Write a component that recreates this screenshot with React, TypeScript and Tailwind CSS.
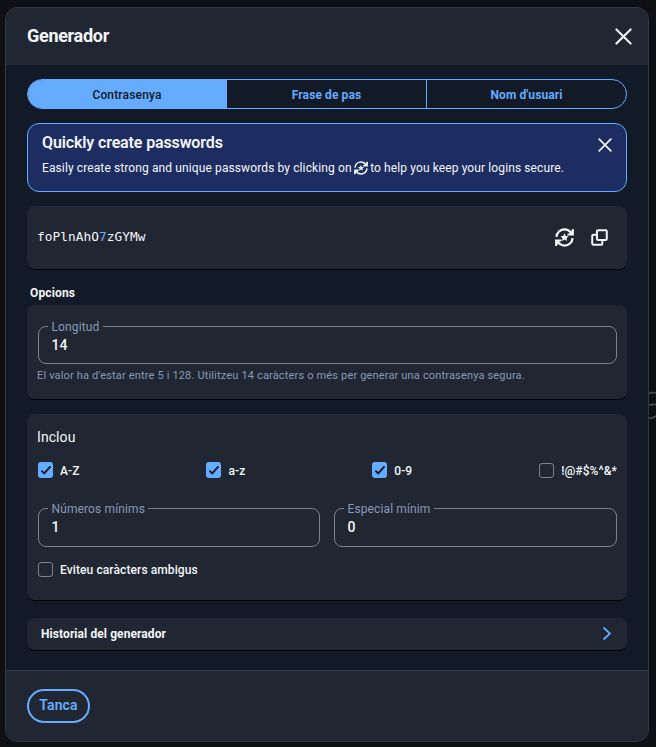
import React from "react";

function CloseIcon({ className }: { className: string }) {
  return (
    <svg viewBox="0 0 18 18" fill="none" stroke="#f3f6f9" strokeLinecap="round" className={className}>
      <path d="M1.5 1.5 16.5 16.5M16.5 1.5 1.5 16.5" strokeWidth="2.2" />
    </svg>
  );
}

function GenerateIcon({ className }: { className: string }) {
  return (
    <svg viewBox="0 0 20 20" fill="none" stroke="#f3f6f9" strokeWidth="2.3" className={className}>
      <path d="M1.5 9.4C1.8 4.8 5.6 1.5 10 1.5c2.9 0 5.4 1.5 7.2 4.1" />
      <path d="M18.5 10.6c-.3 4.6-4.1 7.9-8.5 7.9-2.9 0-5.4-1.5-7.2-4.1" />
      <path d="M19.9 1v6.9h-6.8v-1.7l3-.9 2-4.3z" fill="#f3f6f9" stroke="none" />
      <path d="M.1 19v-6.9h6.8v1.7l-3 .9-2 4.3z" fill="#f3f6f9" stroke="none" />
      <path
        d="m10 5.6 1.3 2.8 3 .3-2.2 2 .6 3-2.7-1.5-2.7 1.5.6-3-2.2-2 3-.3z"
        fill="#f3f6f9"
        stroke="none"
      />
    </svg>
  );
}

function CopyIcon({ className }: { className: string }) {
  return (
    <svg viewBox="0 0 18 18" fill="none" stroke="#f3f6f9" strokeWidth="2.1" strokeLinejoin="round" className={className}>
      <rect x="6.3" y="1.3" width="10.4" height="10.4" rx="1.2" />
      <path d="M6 6H2.7c-.7 0-1.4.5-1.4 1.2v8.1c0 .7.7 1.4 1.4 1.4h8.1c.7 0 1.2-.7 1.2-1.4V12" />
    </svg>
  );
}

function Card({ className, children }: { className: string; children: React.ReactNode }) {
  return <section className={`rounded-lg border-b border-black bg-[#212732] ${className}`}>{children}</section>;
}

function Field({ label, value, className }: { label: string; value: string; className: string }) {
  return (
    <fieldset className={`min-w-0 rounded-lg border border-[#79808e] ${className}`}>
      <legend className="ml-[9px] h-4 pr-[3.5px] pl-[3.5px] text-xs leading-[18px] tracking-[0.12px] text-[#8898b5]">{label}</legend>
      <div className="px-[12.5px] pt-px text-sm leading-5 font-medium text-[#f3f6f9]">{value}</div>
    </fieldset>
  );
}

function Check({ label, checked = false }: { label: string; checked?: boolean }) {
  return (
    <label className="flex h-4 items-center gap-[7px] text-xs font-medium text-[#f3f6f9]">
      {checked ? (
        <span className="flex h-4 w-[15px] items-center justify-center rounded-[3px] bg-[#65abff]">
          <svg viewBox="0 0 12 12" className="size-3" fill="none" stroke="#121a27" strokeWidth="1.9" strokeLinecap="round">
            <path d="M2 7.2 4.3 9.3 10 2.9" />
          </svg>
        </span>
      ) : (
        <span className="h-[15px] w-[15px] rounded-[3px] border border-[#79808e]" />
      )}
      <span className="pt-px tracking-[0.1px]">{label}</span>
    </label>
  );
}

export default function App() {
  return (
    <div className="relative h-[747px] w-[656px] overflow-hidden bg-[#0f1013] pt-[7px] pl-[5px] font-['Roboto',sans-serif]">
      <svg className="absolute top-[388px] left-[648px] h-8 w-2" fill="none" stroke="#4b4b4d" strokeWidth="1.6">
        <path d="M0 5.5Q4 4 8 5M0 17.5Q4 16 8 16.5M0 30Q4 31 8 28" />
      </svg>
      <main className="relative flex h-[735px] w-[644px] flex-col overflow-hidden rounded-xl border border-[#303946] bg-[#121a27]">
        <header className="flex h-[57px] shrink-0 items-center justify-between bg-[#212732] pr-4 pl-[21px]">
          <h1 className="-mt-0.5 text-[18px] font-bold tracking-[-0.3px] text-[#f3f6f9]">Generador</h1>
          <CloseIcon className="size-[17px]" />
        </header>

        <div className="flex flex-1 flex-col px-[21px] pt-3.5">
          <nav className="flex h-[30px] shrink-0 overflow-hidden rounded-full border border-[#65abff] text-xs font-bold text-[#65abff]">
            <div className="flex w-[199px] items-center justify-center bg-[#65abff] pt-px pr-px font-medium tracking-[0.17px] text-[#121a27]">
              Contrasenya
            </div>
            <div className="flex w-[200px] items-center justify-center border-r border-[#65abff] pt-px tracking-[0.1px]">
              Frase de pas
            </div>
            <div className="flex flex-1 items-center justify-center pt-px tracking-[0.1px]">Nom d'usuari</div>
          </nav>

          <section className="mt-3.5 flex h-[69px] shrink-0 justify-between rounded-xl border border-[#65abff] bg-[#1d2d61] pr-3.5 pl-3.5 text-[#f3f6f9]">
            <div className="pt-[9px]">
              <h2 className="text-base leading-5 font-semibold tracking-[-0.13px]">Quickly create passwords</h2>
              <p className="mt-[7px] flex items-center text-xs leading-4 tracking-[0.11px]">
                <span>Easily create strong and unique passwords by clicking on</span>
                <GenerateIcon className="mr-[2.5px] ml-[2px] size-[14px]" />
                <span>to help you keep your logins secure.</span>
              </p>
            </div>
            <CloseIcon className="mt-3.5 size-[14px]" />
          </section>

          <Card className="mt-3.5 flex h-16 shrink-0 items-center justify-between pr-[19px] pl-2.5">
            <code className="-mt-0.5 font-['DejaVu_Sans_Mono',monospace] text-[12.8px] tracking-[0.04px] text-[#f3f6f9]">
              foPlnAhO<span className="text-[#65abff]">7</span>zGYMw
            </code>
            <div className="flex items-center gap-[17px]">
              <GenerateIcon className="size-[19px]" />
              <CopyIcon className="size-[17px]" />
            </div>
          </Card>

          <h2 className="mt-[15px] pl-[3px] text-xs leading-4 font-bold tracking-[0.14px] text-[#f3f6f9]">Opcions</h2>

          <Card className="mt-1 h-[95px] shrink-0 pt-[13px] pr-[10px] pl-[11px]">
            <Field label="Longitud" value="14" className="h-[46px]" />
            <p className="mt-1 -ml-px text-[11px] leading-4 tracking-[0.165px] whitespace-nowrap text-[#8898b5]">
              El valor ha d'estar entre 5 i 128. Utilitzeu 14 caràcters o més per generar una contrasenya segura.
            </p>
          </Card>

          <Card className="mt-3.5 h-[187px] shrink-0 pt-[13px] pr-[10px] pl-[11px]">
            <h3 className="-ml-px text-sm leading-5 tracking-[0.08px] text-[#f3f6f9]">Inclou</h3>
            <div className="mt-[15px] flex justify-between">
              <Check label="A-Z" checked />
              <Check label="a-z" checked />
              <Check label="0-9" checked />
              <Check label="!@#$%^&*" />
            </div>
            <div className="mt-[22px] flex gap-3.5">
              <Field label="Números mínims" value="1" className="h-[47px] w-[282px]" />
              <Field label="Especial mínim" value="0" className="h-[47px] flex-1" />
            </div>
            <div className="mt-3.5">
              <Check label="Eviteu caràcters ambigus" />
            </div>
          </Card>

          <Card className="mt-[17px] flex h-[33px] shrink-0 items-center justify-between pr-4 pl-3.5">
            <h3 className="text-xs font-bold tracking-[0.08px] text-[#f3f6f9]">Historial del generador</h3>
            <svg viewBox="0 0 8 13" className="-mt-px h-[13px] w-2" fill="none" stroke="#65abff" strokeWidth="1.7" strokeLinecap="round">
              <path d="M1 1 7 6.5 1 12" />
            </svg>
          </Card>
        </div>

        <footer className="h-[71px] shrink-0 border-t border-[#303946] bg-[#212732] pt-[18px] pl-[21px]">
          <button className="h-[34px] w-[63px] rounded-full border-2 border-[#65abff] pb-0.5 text-sm font-semibold tracking-[0.1px] text-[#65abff]">
            Tanca
          </button>
        </footer>
      </main>
    </div>
  );
}
